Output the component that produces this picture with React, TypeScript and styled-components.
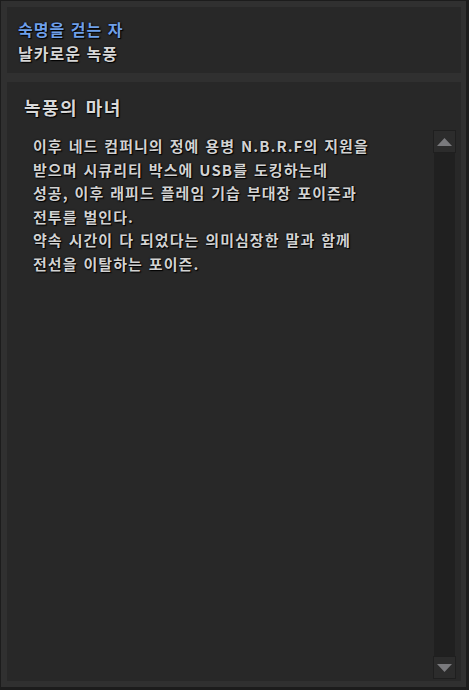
import React from 'react';
import styled, { createGlobalStyle } from 'styled-components';

const GlobalStyle = createGlobalStyle`
  html, body {
    margin: 0;
    padding: 0;
    background: #1b1b1b;
  }
  * { box-sizing: border-box; }
`;

const Frame = styled.div`
  width: 469px;
  height: 690px;
  display: flex;
  flex-direction: column;
  gap: 9px;
  padding: 6px 5px 6px 6px;
  background: #303030;
  border-top: 1px solid #1c1c1c;
  border-left: 1px solid #1c1c1c;
  border-right: 3px solid #1c1c1c;
  border-bottom: 3px solid #1c1c1c;
  font-family: "Noto Sans CJK KR", "Noto Sans", sans-serif;
  font-weight: 700;
  text-shadow: 1px 1px 1px #000, 0 0 2px #000;
`;

const Panel = styled.div`
  background: #282828;
`;

const Header = styled(Panel)`
  height: 66px;
  padding: 10px 11px 0;
`;

const Line = styled.div<{ $color?: string }>`
  font-size: 16px;
  line-height: 24px;
  height: 24px;
  letter-spacing: 1px;
  word-spacing: 1px;
  color: ${p => p.$color ?? '#d6d6d6'};
  white-space: nowrap;
`;

const Body = styled(Panel)`
  flex: 1;
  display: flex;
  flex-direction: column;
  padding: 13px 5px 2px 0;
`;

const Heading = styled.div`
  font-size: 18px;
  line-height: 24px;
  letter-spacing: 1.5px;
  word-spacing: 2px;
  color: #d8d8d8;
  padding-left: 17px;
`;

const Content = styled.div`
  flex: 1;
  display: flex;
  margin-top: 11px;
`;

const Text = styled.div`
  flex: 1;
  padding: 4px 0 0 26px;
  font-size: 15px;
  line-height: 23.6px;
  letter-spacing: 1.05px;
  word-spacing: 1.5px;
  color: #d2d2d2;
  white-space: nowrap;
`;

const ScrollBar = styled.div`
  width: 23px;
  display: flex;
  flex-direction: column;
`;

const Track = styled.div`
  flex: 1;
  margin: 0 1px;
  background: #202020;
`;

const ArrowButton = styled.div`
  height: 23px;
  display: flex;
  align-items: center;
  justify-content: center;
  background: #2c2c2c;
  border: 1px solid #1f1f1f;
`;

const Arrow = ({ down }: { down?: boolean }) => (
  <svg width="15" height="10" viewBox="0 0 15 10">
    <polygon
      points={down ? '0,1 15,1 7.5,9' : '0,9 15,9 7.5,1'}
      fill="#7a7a7d"
    />
  </svg>
);

const lines = [
  '이후 네드 컴퍼니의 정예 용병 N.B.R.F의 지원을',
  '받으며 시큐리티 박스에 USB를 도킹하는데',
  '성공, 이후 래피드 플레임 기습 부대장 포이즌과',
  '전투를 벌인다.',
  '약속 시간이 다 되었다는 의미심장한 말과 함께',
  '전선을 이탈하는 포이즌.',
];

export default function App() {
  return (
    <>
      <GlobalStyle />
      <Frame>
        <Header>
          <Line $color="#6f9fe8">숙명을 걷는 자</Line>
          <Line>날카로운 녹풍</Line>
        </Header>
        <Body>
          <Heading>녹풍의 마녀</Heading>
          <Content>
            <Text>
              {lines.map((l, i) => (
                <div key={i}>{l}</div>
              ))}
            </Text>
            <ScrollBar>
              <ArrowButton><Arrow /></ArrowButton>
              <Track />
              <ArrowButton><Arrow down /></ArrowButton>
            </ScrollBar>
          </Content>
        </Body>
      </Frame>
    </>
  );
}
